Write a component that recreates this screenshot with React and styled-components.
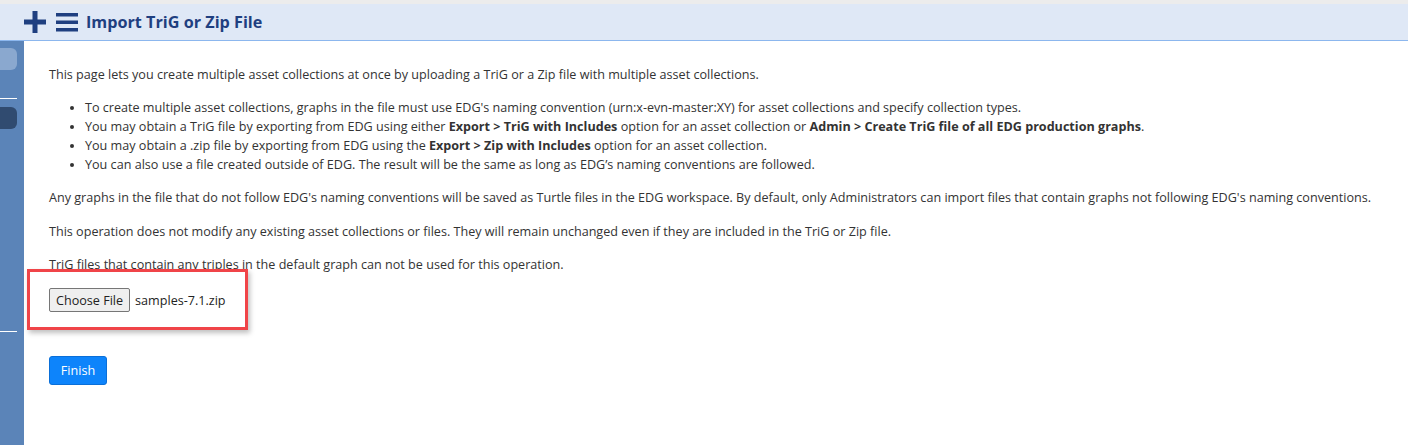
import React from 'react';
import styled, { createGlobalStyle } from 'styled-components';

const GlobalStyle = createGlobalStyle`
  html, body {
    margin: 0;
    padding: 0;
    background: #ffffff;
  }
  body {
    font-family: "Open Sans", "Liberation Sans", sans-serif;
    font-size: 12.6px;
    color: #333333;
  }
`;

//whole page
const Page = styled.div`
  height: 445px;
  display: flex;
  flex-direction: column;
  border-top: 4px solid #ececec;
  box-sizing: border-box;
`;

//header bar
const Header = styled.div`
  height: 36px;
  flex: none;
  background: #dfe8f6;
  border-bottom: 1px solid #8cb7ee;
  display: flex;
  align-items: center;
  padding-left: 24px;
  gap: 10px;
`;

const Title = styled.h1`
  margin: 0 0 0 -2px;
  font-size: 16.2px;
  font-weight: 700;
  color: #1f3f80;
`;

const Body = styled.div`
  flex: 1;
  display: flex;
`;

//left side rail
const Rail = styled.div`
  width: 24px;
  flex: none;
  background: #5b84b8;
  display: flex;
  flex-direction: column;
  padding-top: 7px;
`;

const RailPill = styled.div`
  width: 17px;
  height: 22px;
  border-radius: 0 6px 6px 0;
  background: ${(p) => p.dark ? '#304b70' : '#8aa8cf'};
  margin-top: ${(p) => p.top || 0}px;
`;

const RailLine = styled.div`
  width: 17px;
  height: 1px;
  background: #ffffff;
  margin-top: ${(p) => p.top}px;
`;

const Content = styled.div`
  flex: 1;
  padding: 24px 0 0 25px;
`;

const Para = styled.p`
  margin: 0 0 14.5px 0;
  line-height: 19px;
`;

const LastPara = styled(Para)`
  margin-bottom: 0;
`;

const List = styled.ul`
  margin: -0.5px 0 14px 0;
  padding-left: 36px;
  line-height: 19px;
`;

const FileBox = styled.div`
  display: inline-flex;
  align-items: center;
  gap: 5px;
  margin: -5px 0 0 -22px;
  padding: 16px 19px 15px 19px;
  border: 3px solid #f04448;
  box-shadow: 2px 3px 5px rgba(0, 0, 0, 0.25);
`;

const ChooseButton = styled.button`
  font-family: "Open Sans", "Liberation Sans", sans-serif;
  font-size: 12.6px;
  color: #222;
  background: #efefef;
  border: 1px solid #767676;
  border-radius: 2px;
  height: 24px;
  padding: 0 6px;
`;

const FileName = styled.span`
  color: #222;
`;

const Finish = styled.button`
  display: block;
  margin-top: 26px;
  font-family: "Open Sans", "Liberation Sans", sans-serif;
  font-size: 12.6px;
  color: #ffffff;
  background: #0d84fb;
  border: 1px solid #0a6fd8;
  border-radius: 3px;
  width: 58px;
  height: 29px;
`;

const PlusIcon = () => (
  <svg width="22" height="22" viewBox="0 0 22 22">
    <rect x="0" y="8.5" width="22" height="5" fill="#1f3f80" />
    <rect x="8.5" y="0" width="5" height="22" fill="#1f3f80" />
  </svg>
);

const MenuIcon = () => (
  <svg width="22" height="20" viewBox="0 0 22 20">
    <rect x="0" y="1" width="22" height="3.5" fill="#1f3f80" />
    <rect x="0" y="8.5" width="22" height="3.5" fill="#1f3f80" />
    <rect x="0" y="16" width="22" height="3.5" fill="#1f3f80" />
  </svg>
);

const App = () => {
  return (
    <Page>
      <GlobalStyle />
      <Header>
        <PlusIcon />
        <MenuIcon />
        <Title>Import TriG or Zip File</Title>
      </Header>
      <Body>
        <Rail>
          <RailPill />
          <RailLine top={28} />
          <RailPill dark top={8} />
          <RailLine top={202} />
        </Rail>
        <Content>
          <Para>This page lets you create multiple asset collections at once by uploading a TriG or a Zip file with multiple asset collections.</Para>
          <List>
            <li>To create multiple asset collections, graphs in the file must use EDG's naming convention (urn:x-evn-master:XY) for asset collections and specify collection types.</li>
            <li>You may obtain a TriG file by exporting from EDG using either <b>Export &gt; TriG with Includes</b> option for an asset collection or <b>Admin &gt; Create TriG file of all EDG production graphs</b>.</li>
            <li>You may obtain a .zip file by exporting from EDG using the <b>Export &gt; Zip with Includes</b> option for an asset collection.</li>
            <li>You can also use a file created outside of EDG. The result will be the same as long as EDG’s naming conventions are followed.</li>
          </List>
          <Para>Any graphs in the file that do not follow EDG's naming conventions will be saved as Turtle files in the EDG workspace. By default, only Administrators can import files that contain graphs not following EDG's naming conventions.</Para>
          <Para>This operation does not modify any existing asset collections or files. They will remain unchanged even if they are included in the TriG or Zip file.</Para>
          <LastPara>TriG files that contain any triples in the default graph can not be used for this operation.</LastPara>
          <FileBox>
            <ChooseButton>Choose File</ChooseButton>
            <FileName>samples-7.1.zip</FileName>
          </FileBox>
          <Finish>Finish</Finish>
        </Content>
      </Body>
    </Page>
  );
};

export default App;
